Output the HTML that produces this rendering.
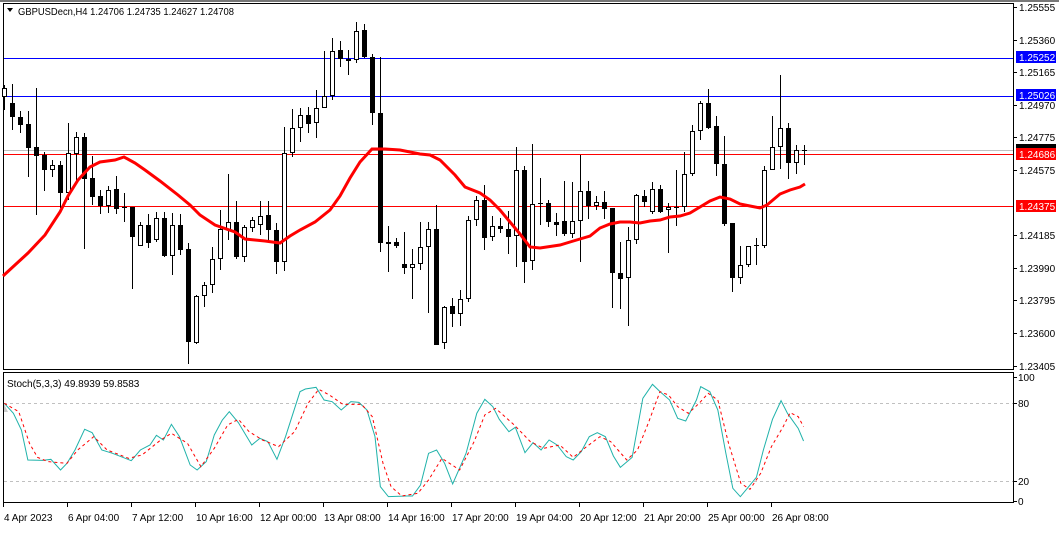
<!DOCTYPE html>
<html><head><meta charset="utf-8"><style>
body{margin:0;width:1059px;height:529px;overflow:hidden;background:#fff;font-family:"Liberation Sans",sans-serif}
svg text{font-family:"Liberation Sans",sans-serif;font-size:10px}
</style></head><body>
<svg id="s" width="1059" height="529" xmlns="http://www.w3.org/2000/svg">
<rect x="0" y="0" width="1059" height="2" fill="#777"/>
<rect x="3.5" y="3.5" width="1010" height="366" fill="#fff" stroke="#000"/>
<rect x="3.5" y="372.5" width="1010" height="130" fill="#fff" stroke="#000"/>
<line x1="4" x2="1013" y1="150.5" y2="150.5" stroke="#c0c0c0"/>
<line x1="4" x2="1013" y1="58.5" y2="58.5" stroke="#0000ff"/>
<line x1="4" x2="1013" y1="96.5" y2="96.5" stroke="#0000ff"/>
<line x1="4" x2="1013" y1="154.5" y2="154.5" stroke="#ff0000"/>
<line x1="4" x2="1013" y1="206.5" y2="206.5" stroke="#ff0000"/>
<g id="c"></g>
<polyline fill="none" stroke="#ff0000" stroke-width="3" points="3,276 28,253 45,235 60,212 68,196 78,180 90,167 100,162 115,160 124,157 135,163 145,170 160,181 178,195 190,205 200,215 215,225 235,232 245,239 255,240 265,241 280,243 290,236 300,230 315,222 330,210 340,196 350,178 360,162 372,149 385,149 400,150 420,154 430,155 440,160 455,175 465,187 480,193 490,200 500,210 510,222 520,234 530,247 540,248 560,245 570,242 580,239 590,236 600,228 610,224 620,222 630,222 640,223 650,221 660,220 670,217 680,216 690,213 700,207 710,201 720,197 730,199 740,204 750,206 760,208 767,205 780,194 790,190 800,187 805,184"/>
<line x1="4" x2="1013" y1="403.5" y2="403.5" stroke="#c0c0c0" stroke-dasharray="3,3"/>
<line x1="4" x2="1013" y1="481.5" y2="481.5" stroke="#c0c0c0" stroke-dasharray="3,3"/>
<g transform="translate(0,370) scale(0.5357,0.3333)">
<polyline fill="none" stroke="#20b2aa" stroke-width="1" vector-effect="non-scaling-stroke" points="8,100 25,130 40,180 52,270 80,271 95,268 113,300 125,280 140,240 158,178 172,188 190,240 210,250 245,272 262,240 280,225 292,196 305,210 320,163 335,200 355,285 368,300 385,275 400,195 415,150 428,125 445,158 470,225 485,205 500,215 517,268 533,200 560,65 570,57 590,52 605,90 620,95 637,120 655,95 670,97 685,120 700,200 710,350 725,380 760,378 770,378 785,345 800,250 815,240 830,280 845,342 870,250 890,130 905,88 920,110 932,148 950,185 962,172 980,248 995,218 1010,240 1025,210 1040,225 1057,260 1070,270 1085,245 1100,200 1115,188 1130,200 1145,258 1158,292 1180,262 1200,85 1218,43 1232,65 1250,90 1265,145 1280,153 1300,90 1308,50 1325,65 1340,120 1355,250 1368,355 1382,380 1395,355 1412,322 1425,240 1442,148 1458,92 1470,130 1490,175 1500,213"/>
<polyline fill="none" stroke="#ff0000" stroke-width="1" stroke-dasharray="3,3" vector-effect="non-scaling-stroke" points="8,100 35,125 55,220 70,262 90,275 125,280 145,240 175,200 200,240 240,265 265,255 300,210 320,190 350,220 375,290 400,235 425,165 445,148 465,185 490,210 520,230 550,185 575,100 595,58 615,75 640,103 675,103 695,140 715,280 730,350 750,378 780,370 800,330 825,265 858,300 885,215 905,135 925,115 960,165 990,215 1015,235 1045,225 1070,262 1095,230 1120,200 1140,215 1170,270 1190,240 1210,160 1232,65 1248,75 1265,110 1285,130 1305,100 1322,70 1340,90 1360,220 1383,340 1400,358 1420,310 1440,230 1462,170 1475,128 1490,140 1500,170"/>
</g>
<path d="M7 8 L13 8 L10 12 Z" fill="#000"/>
<text x="18" y="15" textLength="216" lengthAdjust="spacingAndGlyphs">GBPUSDecn,H4  1.24706 1.24735 1.24627 1.24708</text>
<text x="7" y="387" font-size="9">Stoch(5,3,3) 49.8939 59.8583</text>
<path d="M4 412 L4 404 L8 412Z" fill="#ccc"/>
<g id="ax"></g>
<rect x="1016" y="51" width="40" height="12" fill="#0000ff"/>
<rect x="1016" y="89" width="40" height="12" fill="#0000ff"/>
<rect x="1016" y="144" width="40" height="4" fill="#000"/>
<rect x="1016" y="148" width="40" height="12" fill="#ff0000"/>
<rect x="1016" y="200" width="40" height="12" fill="#ff0000"/>
<text x="1019" y="61" fill="#fff">1.25252</text>
<text x="1019" y="99" fill="#fff">1.25026</text>
<text x="1019" y="158" fill="#fff">1.24686</text>
<text x="1019" y="210" fill="#fff">1.24375</text>
</svg>
<script>
var C=[[4,1,88,97,85,110],[12,0,103,117,84,130],[20,0,117,125,111,133],[28,0,124,148,111,177],[36,0,147,156,88,215],[44,0,155,170,152,191],[52,1,170,165,160,177],[60,0,165,193,161,208],[68,1,193,153,123,200],[76,1,154,137,132,183],[84,0,137,179,133,249],[92,0,178,197,156,205],[100,0,196,206,190,214],[108,1,206,190,186,213],[116,0,189,209,176,214],[124,0,207,208,193,222],[132,0,207,237,207,289],[140,1,246,225,222,246],[148,0,225,243,214,248],[156,1,240,218,212,242],[164,0,218,256,212,257],[172,1,256,225,213,275],[180,0,225,250,214,255],[188,0,249,342,243,364],[196,1,343,296,295,344],[204,1,296,285,282,307],[212,1,285,259,247,293],[220,1,259,229,210,270],[228,1,230,222,174,240],[236,0,222,257,201,259],[244,1,257,227,225,262],[252,1,228,220,217,232],[260,1,225,216,201,235],[268,0,215,230,201,242],[276,0,230,262,223,274],[284,1,262,153,127,271],[292,1,153,128,109,157],[300,1,128,115,108,142],[308,0,115,124,107,133],[316,1,123,108,90,138],[324,1,108,96,51,108],[332,1,96,51,38,100],[340,0,50,59,41,67],[348,0,59,61,50,75],[356,1,60,31,22,63],[364,0,30,57,24,58],[372,0,57,113,54,125],[380,0,113,243,57,252],[388,0,242,244,226,272],[396,0,242,246,238,248],[404,0,264,268,232,274],[412,1,268,264,249,299],[420,1,264,247,222,270],[428,1,247,229,222,313],[436,0,229,345,205,345],[444,1,343,307,306,349],[452,0,306,314,298,327],[460,1,314,299,290,326],[468,1,299,220,216,302],[476,1,220,200,196,226],[484,0,200,238,185,250],[492,1,237,226,216,241],[500,0,226,229,218,233],[508,0,229,237,211,254],[516,1,236,170,147,267],[524,0,170,262,166,283],[532,1,261,204,144,270],[540,0,203,204,178,225],[548,0,203,222,200,227],[556,0,222,225,213,236],[564,0,221,234,181,236],[572,1,234,221,182,238],[580,1,221,191,155,262],[588,0,191,206,181,219],[596,1,206,202,196,210],[604,0,202,209,191,219],[612,0,208,273,208,308],[620,0,273,279,242,309],[628,1,278,240,227,326],[636,1,240,195,194,244],[644,0,196,202,190,207],[652,1,212,189,182,214],[660,0,189,212,185,213],[668,1,210,207,203,253],[676,0,207,208,170,226],[684,1,207,174,152,212],[692,1,174,131,125,176],[700,1,131,103,101,140],[708,0,103,128,89,129],[716,0,126,164,116,176],[724,0,164,224,136,226],[732,0,223,278,223,292],[740,1,278,265,246,284],[748,1,265,246,246,267],[756,0,245,246,238,265],[764,1,246,170,166,248],[772,1,170,147,116,170],[780,1,147,128,75,169],[788,0,128,163,123,179],[796,1,163,150,145,174],[804,0,150,151,145,165]];
var h='';C.forEach(function(c){var x=c[0],t=Math.min(c[2],c[3]),b=Math.max(c[2],c[3]);
h+='<line x1="'+(x+.5)+'" x2="'+(x+.5)+'" y1="'+c[4]+'" y2="'+c[5]+'" stroke="#000"/>';
if(b-t<2){h+='<rect x="'+(x-2)+'" y="'+t+'" width="5" height="1" fill="#000"/>';}
else if(c[1])h+='<rect x="'+(x-1.5)+'" y="'+(t+.5)+'" width="4" height="'+(b-t-1)+'" fill="#fff" stroke="#000"/>';
else h+='<rect x="'+(x-2)+'" y="'+t+'" width="5" height="'+(b-t)+'" fill="#000"/>';});
document.getElementById('c').innerHTML=h;
var a='',P=[["1.25555",7],["1.25360",40],["1.25165",72],["1.24970",105],["1.24775",137],["1.24575",170],["1.24185",235],["1.23990",268],["1.23795",300],["1.23600",333],["1.23405",366]];
P.forEach(function(p){a+='<line x1="1014" x2="1017" y1="'+(p[1]+.5)+'" y2="'+(p[1]+.5)+'" stroke="#000"/><text x="1019" y="'+(p[1]+4)+'">'+p[0]+'</text>';});
[["100",377],["80",403],["20",481],["0",501]].forEach(function(p){a+='<line x1="1014" x2="1017" y1="'+(p[1]+.5)+'" y2="'+(p[1]+.5)+'" stroke="#000"/><text x="1018" y="'+(p[1]+4)+'">'+p[0]+'</text>';});
var T=["4 Apr 2023","6 Apr 04:00","7 Apr 12:00","10 Apr 16:00","12 Apr 00:00","13 Apr 08:00","14 Apr 16:00","17 Apr 20:00","19 Apr 04:00","20 Apr 12:00","21 Apr 20:00","25 Apr 00:00","26 Apr 08:00"];
T.forEach(function(t,i){var x=3+i*64;a+='<line x1="'+(x+.5)+'" x2="'+(x+.5)+'" y1="503" y2="507" stroke="#000"/><text x="'+(x+1)+'" y="521">'+t+'</text>';});
document.getElementById('ax').innerHTML=a;
</script>
</body></html>
